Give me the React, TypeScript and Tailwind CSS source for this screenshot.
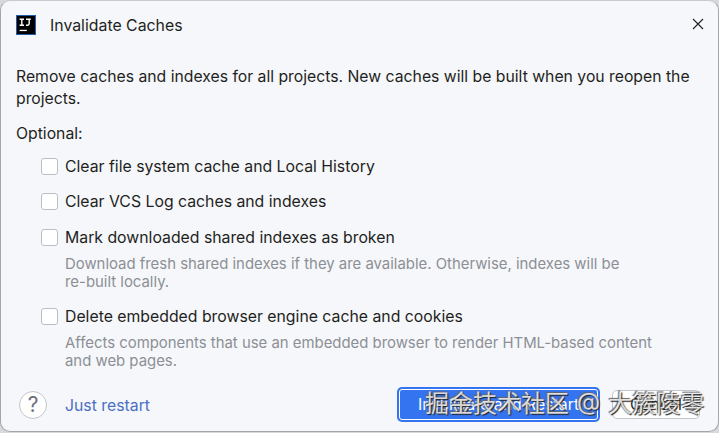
function Option({ label, hint, className }: { label: string; hint?: string[]; className?: string }) {
  return (
    <div className={className}>
      <label className="flex items-center h-[22px]">
        <span className="w-[17px] h-[17px] mb-[2px] rounded-[3px] border border-[#b9bdc5] bg-white shrink-0" />
        <span className="ml-[7px] text-[15.8px] leading-[22px] text-[#1e1f22]">{label}</span>
      </label>
      {hint && (
        <div className="ml-[24px] mt-[6px] text-[14.9px] leading-[18px] text-[#8c8f96]">
          {hint.map((line) => (
            <div key={line}>{line}</div>
          ))}
        </div>
      )}
    </div>
  );
}

export default function App() {
  return (
    <div className="relative w-[719px] h-[433px] overflow-hidden bg-[#d9d9dc] font-['Inter',sans-serif]">
      <div className="w-[719px] h-[432px] rounded-[10px] bg-[#f6f7fa] border border-[#a6a6aa] border-t-[#c9cace] flex flex-col">
        <div className="flex items-center h-[49px] pl-[15px] pr-[14px]">
          <svg width="20" height="20" viewBox="0 0 20 20" className="shrink-0 mb-px">
            <rect width="20" height="20" fill="#000" />
            <rect x="0.5" y="0.5" width="19" height="19" fill="none" stroke="#1f5fa8" strokeWidth="1" />
            <path d="M3.6 4.2h4.4M5.8 4.2v6M3.6 10.2h4.4M10 4.2h4.8M13.2 4.2v4.4q0 1.6-1.6 1.6h-1.6" stroke="#fff" strokeWidth="1.4" fill="none" />
            <rect x="3.6" y="14.8" width="7.2" height="1.3" fill="#fff" />
          </svg>
          <span className="ml-[14px] text-[15.85px] text-[#1e1f22]">Invalidate Caches</span>
          <svg width="12" height="12" viewBox="0 0 12 12" className="ml-auto mb-[3px]" fill="none" stroke="#1e1f22" strokeWidth="1.1">
            <path d="M1 1l10 10M11 1L1 11" />
          </svg>
        </div>

        <div className="px-[15px] pt-[16px] text-[15.75px] leading-[22px] text-[#1e1f22]">
          <p>Remove caches and indexes for all projects. New caches will be built when you reopen the</p>
          <p>projects.</p>
          <p className="mt-[13px]">Optional:</p>
        </div>

        <div className="pl-[40px] pt-[11px]">
          <Option label="Clear file system cache and Local History" />
          <Option className="mt-[13px]" label="Clear VCS Log caches and indexes" />
          <Option
            className="mt-[14px]"
            label="Mark downloaded shared indexes as broken"
            hint={['Download fresh shared indexes if they are available. Otherwise, indexes will be', 're-built locally.']}
          />
          <Option
            className="mt-[15px]"
            label="Delete embedded browser engine cache and cookies"
            hint={['Affects components that use an embedded browser to render HTML-based content', 'and web pages.']}
          />
        </div>

        <div className="mt-auto h-[53px] flex items-center pl-[18px] pr-[18px]">
          <div className="w-[28px] h-[28px] rounded-full border border-[#c4c6cc] bg-white flex items-center justify-center text-[21px] text-[#6c707e]">
            ?
          </div>
          <span className="ml-[18px] mt-[2px] text-[15.8px] text-[#4a6fc3]">Just restart</span>
          <div className="ml-auto flex items-center gap-[12px]">
            <div className="w-[203px] h-[35px] rounded-[5px] bg-[#3574f0] flex items-center justify-center text-[15.8px] text-white outline outline-1 -outline-offset-3 outline-white">
              Invalidate and Restart
            </div>
            <div className="w-[88px] h-[29px] rounded-[5px] border border-[#c4c6cc] bg-white flex items-center justify-center text-[15.8px] text-[#1e1f22]">
              Cancel
            </div>
          </div>
        </div>
      </div>

      <div className="absolute left-[425px] top-[386px] flex items-center font-['Noto_Sans_CJK_SC',sans-serif] text-[24px] leading-[32px] text-white/80 [text-shadow:1px_1px_1px_#222,-1px_-1px_1px_#666]">
        <span>掘金技术社区</span>
        <span className="ml-[8px] font-['Inter',sans-serif]">@</span>
        <span className="ml-[8px]">大簇陵零</span>
      </div>
    </div>
  );
}
